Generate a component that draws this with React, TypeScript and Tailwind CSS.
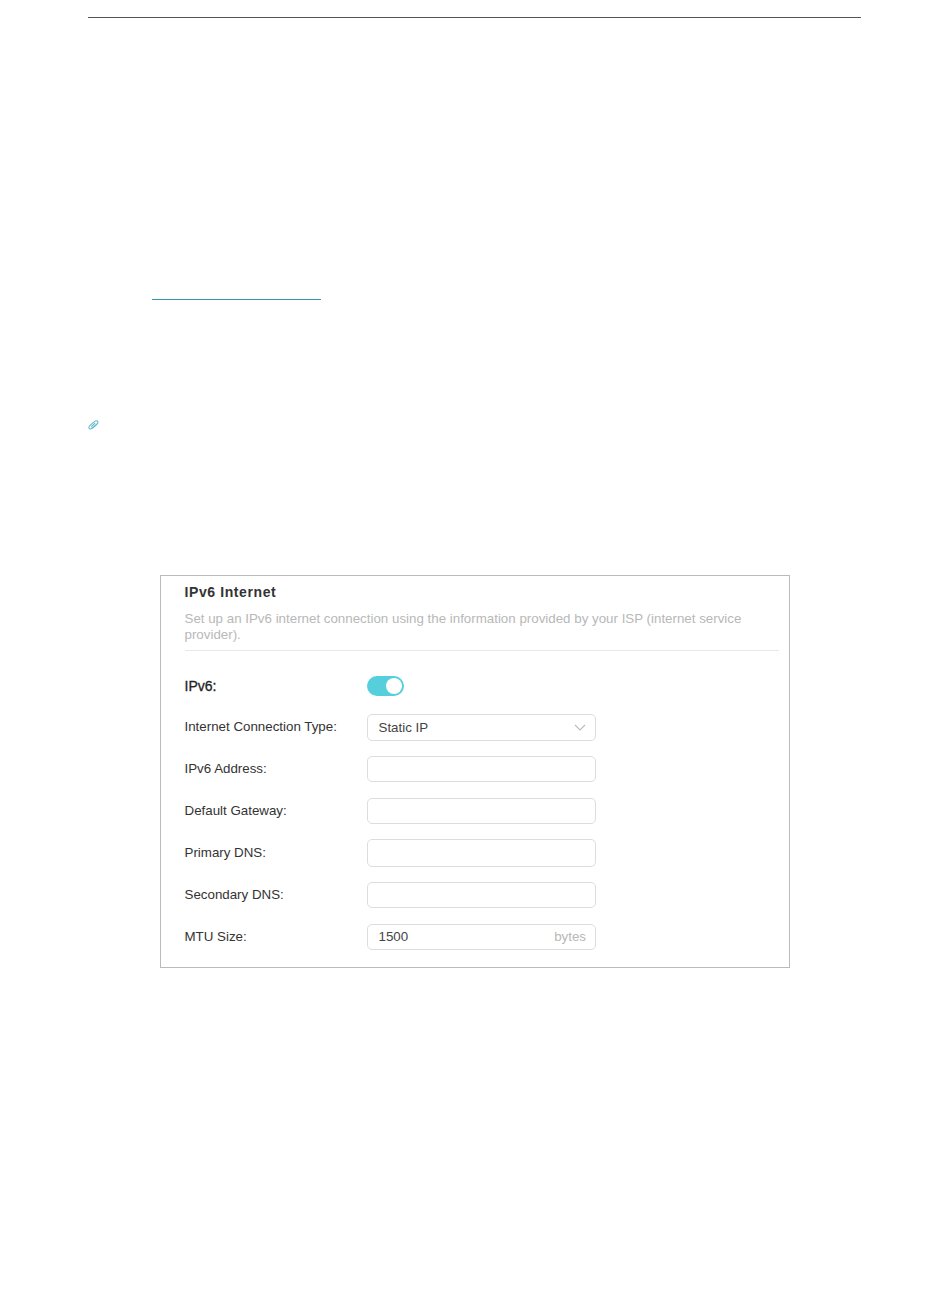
import React from "react";

const rows = [
  { label: "IPv6 Address:", h: "h-[26px]", mb: "mb-[16px]" },
  { label: "Default Gateway:", h: "h-[26px]", mb: "mb-[15px]" },
  { label: "Primary DNS:", h: "h-[28px]", mb: "mb-[15px]" },
  { label: "Secondary DNS:", h: "h-[26px]", mb: "mb-[16px]" },
];

export default function App() {
  return (
    <div className="w-[950px] h-[1297px] bg-white overflow-hidden font-['Liberation_Sans',Arial,sans-serif] pt-[17px]">
      <div className="ml-[88px] w-[773px] h-px bg-[#555555]" />
      <div className="ml-[152px] mt-[281px] w-[169px] h-px bg-[#2f97ad]" />
      <div className="ml-[88px] mt-[120px] h-[10px] w-[11px]">
        <svg width="11" height="10" viewBox="0 0 11 10" fill="none">
          <path
            d="M2.6 9.2 9 4C10.2 3 10.2 1.6 9.4 1 8.6.5 7.6.7 6.8 1.4L1.8 5.6C.8 6.5.7 7.9 1.5 8.6 2.3 9.2 3.4 9 4.3 8.2L9 4.4M3.2 6.6 7.2 3.2"
            stroke="#62b9cd"
            strokeWidth="1.1"
          />
        </svg>
      </div>

      <section className="ml-[160px] mt-[145px] w-[630px] h-[393px] border border-[#bbbbbb] pl-[23.5px] pr-[10px] text-[13.33px]">
        <h2 className="mt-[8px] text-[14px] leading-[17px] font-bold text-[#333333] tracking-[0.6px]">IPv6 Internet</h2>
        <p className="mt-[10px] leading-[16px] text-[#b8b8b8] pb-[7px] border-b border-[#e8e8e8]">
          Set up an IPv6 internet connection using the information provided by your ISP (internet service provider).
        </p>

        <div className="mt-[25px] flex items-center h-[20px] mb-[18px]">
          <span className="w-[182.5px] text-[#222222] text-[14px] [-webkit-text-stroke:0.3px_#222222]">IPv6:</span>
          <span className="relative w-[37px] h-[20px] rounded-full bg-[#55cfdb]">
            <span className="absolute right-[2px] top-[2px] w-[16px] h-[16px] rounded-full bg-white" />
          </span>
        </div>

        <div className="flex items-center mb-[15px]">
          <span className="w-[182.5px] text-[#333333] -mt-[2px]">Internet Connection Type:</span>
          <div className="w-[229px] h-[27px] rounded-[5px] border border-[#dddddd] flex items-center justify-between pl-[10.5px] pr-[9px]">
            <span className="text-[#444444]">Static IP</span>
            <svg width="12" height="7" viewBox="0 0 12 7" fill="none">
              <path d="M1 1l5 5 5-5" stroke="#bdbdbd" strokeWidth="1.2" />
            </svg>
          </div>
        </div>

        {rows.map((r) => (
          <div key={r.label} className={`flex items-center ${r.mb}`}>
            <span className="w-[182.5px] text-[#333333]">{r.label}</span>
            <div className={`w-[229px] ${r.h} rounded-[5px] border border-[#dddddd]`} />
          </div>
        ))}

        <div className="flex items-center">
          <span className="w-[182.5px] text-[#333333]">MTU Size:</span>
          <div className="w-[229px] h-[26px] rounded-[5px] border border-[#dddddd] flex items-center justify-between pl-[10.5px] pr-[9px]">
            <span className="text-[#444444]">1500</span>
            <span className="text-[#b8b8b8]">bytes</span>
          </div>
        </div>
      </section>
    </div>
  );
}
